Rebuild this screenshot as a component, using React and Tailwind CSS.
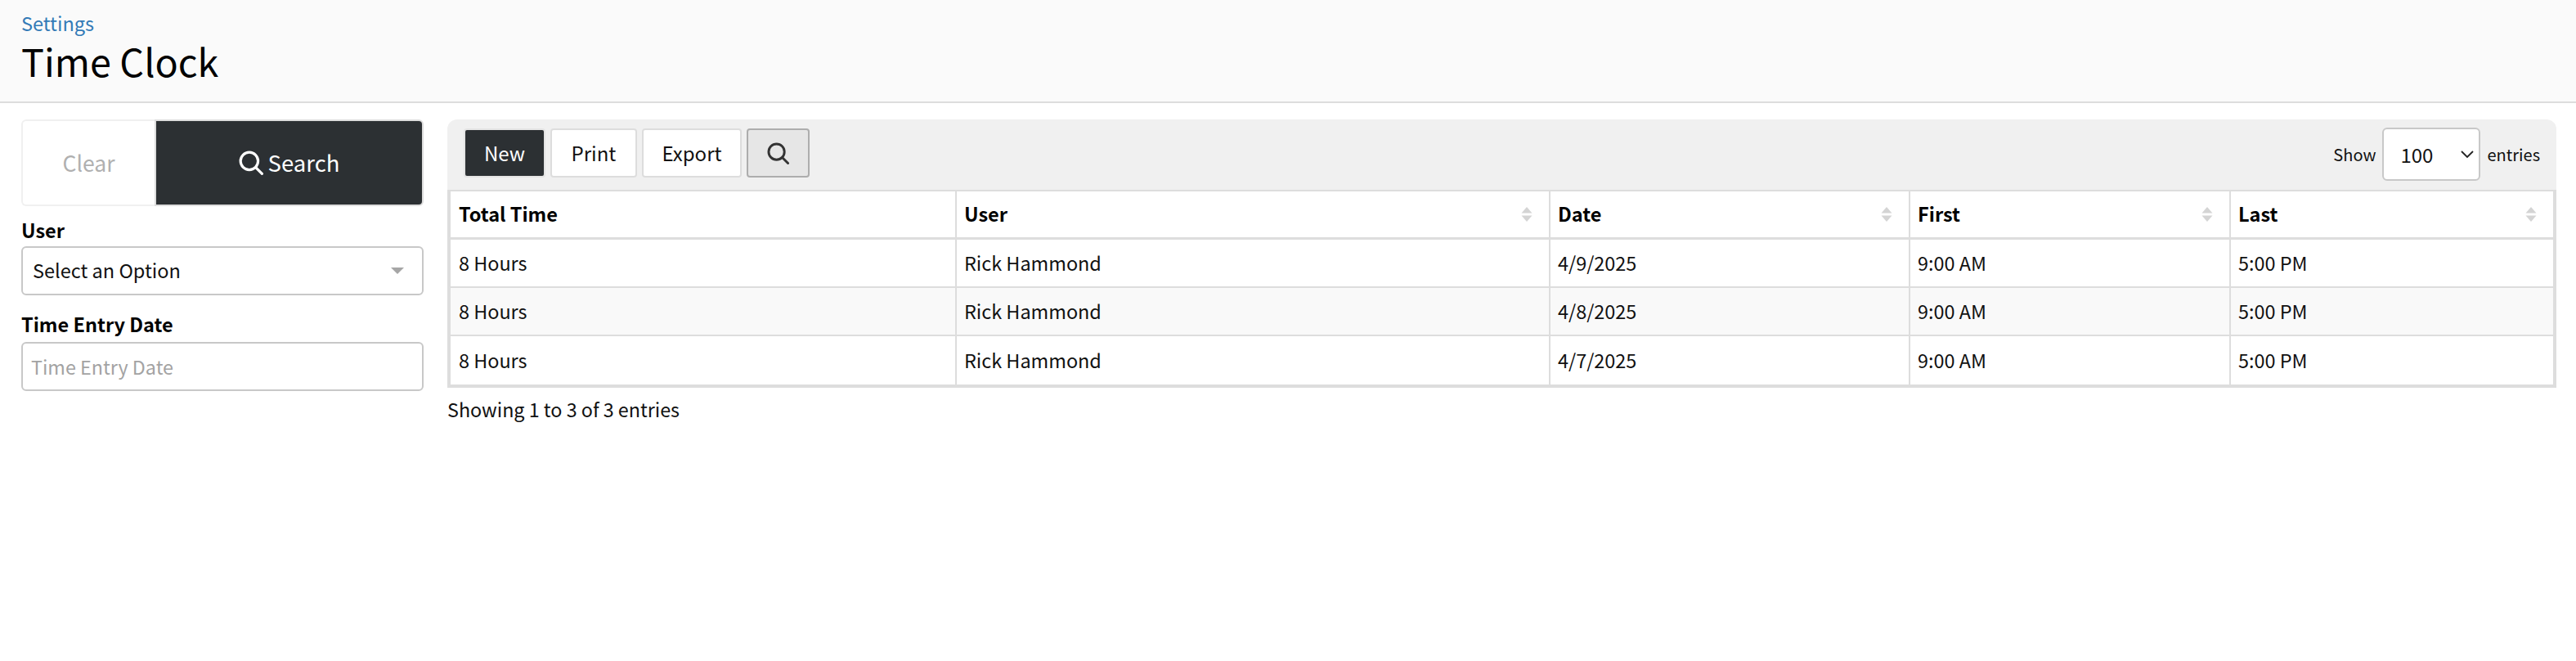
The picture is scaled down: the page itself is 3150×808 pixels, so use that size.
const rows = [
  ['8 Hours', 'Rick Hammond', '4/9/2025', '9:00 AM', '5:00 PM'],
  ['8 Hours', 'Rick Hammond', '4/8/2025', '9:00 AM', '5:00 PM'],
  ['8 Hours', 'Rick Hammond', '4/7/2025', '9:00 AM', '5:00 PM'],
]

const columns = [
  { name: 'Total Time', width: 'w-[619px]' },
  { name: 'User', width: 'w-[726px]', sort: true },
  { name: 'Date', width: 'w-[440px]', sort: true },
  { name: 'First', width: 'w-[392px]', sort: true },
  { name: 'Last', width: 'w-[394px]', sort: true },
]

const SearchIcon = ({ className }) => (
  <svg viewBox="0 0 28 28" fill="none" stroke="currentColor" strokeWidth="3" strokeLinecap="round" className={className}>
    <circle cx="12" cy="12" r="10" />
    <line x1="19.5" y1="19.5" x2="26.5" y2="26.5" />
  </svg>
)

const SortIcon = () => (
  <svg viewBox="0 0 14 18" className="w-[14px] h-[18px] shrink-0" fill="#d4d4d4">
    <path d="M7 0 L13.5 7.5 H0.5 Z" />
    <path d="M7 18 L13.5 10.5 H0.5 Z" />
  </svg>
)

const ToolButton = ({ children, className }) => (
  <button className={`h-[60px] rounded-[4px] border-2 flex items-center justify-center text-[24px] ${className}`}>
    {children}
  </button>
)

export default function App() {
  return (
    <div className="min-h-[808px] bg-white text-[#111] font-['Noto_Sans_CJK_JP','Noto_Sans',sans-serif]">
      <header className="h-[126px] bg-[#fafafa] border-b-2 border-[#dddddd] pl-[26px] pt-[12px]">
        <a className="block text-[23.5px] leading-[32px] text-[#337ab7]">Settings</a>
        <h1 className="text-[46.7px] leading-[60px] text-black">Time Clock</h1>
      </header>

      <div className="flex pt-[20px] pl-[26px] pr-[24px] gap-[28px]">
        <aside className="w-[492px] shrink-0">
          <div className="flex h-[106px]">
            <button className="w-[163px] border-2 border-r-0 border-[#f0f0f0] rounded-l-[6px] bg-white text-[26.5px] text-[#b0b0b0]">Clear</button>
            <button className="flex-1 flex items-center justify-center gap-[6px] border-2 border-[#dddddd] rounded-r-[6px] bg-[#2c3033] text-[27.5px] text-white">
              <SearchIcon className="w-[30px] h-[30px]" />
              Search
            </button>
          </div>

          <label className="block mt-[12px] text-[23.5px] leading-[34px] font-bold text-black">User</label>
          <div className="mt-[3px] h-[60px] flex items-center justify-between pl-[12px] pr-[22px] border-2 border-[#c8c8c8] rounded-[6px] bg-white text-[23.5px]">
            <span>Select an Option</span>
            <svg viewBox="0 0 16 8" className="w-[16px] h-[8px]" fill="#a6a6a6"><path d="M0 0 H16 L8 8 Z" /></svg>
          </div>

          <label className="block mt-[18px] text-[23.5px] leading-[34px] font-bold text-black">Time Entry Date</label>
          <input
            placeholder="Time Entry Date"
            className="mt-[5px] block w-full h-[60px] px-[10px] border-2 border-[#c8c8c8] rounded-[6px] bg-white text-[23.3px] placeholder:text-[#a3a3a3] outline-none"
          />
        </aside>

        <main className="flex-1 min-w-0 pl-[1px]">
          <div className="h-[86px] bg-[#f0f0f0] rounded-t-[12px] flex items-start justify-between pl-[20px] pr-[20px] pt-[10px]">
            <div className="flex gap-[6px] pt-[1px]">
              <ToolButton className="w-[100px] bg-[#2c3033] border-[#e4e4e4] text-white">New</ToolButton>
              <ToolButton className="w-[106px] bg-white border-[#dddddd]">Print</ToolButton>
              <ToolButton className="w-[122px] bg-white border-[#dddddd]">Export</ToolButton>
              <ToolButton className="w-[77px] bg-[#e6e6e6] border-[#adadad] text-[#333]">
                <SearchIcon className="w-[27px] h-[27px]" />
              </ToolButton>
            </div>
            <div className="flex items-center gap-[8px] text-[20px]">
              <span>Show</span>
              <div className="w-[120px] h-[65px] flex items-center justify-between pl-[20px] pr-[6px] border-2 border-[#c8c8c8] rounded-[6px] bg-white text-[24px]">
                <span>100</span>
                <svg viewBox="0 0 16 10" fill="none" stroke="#222" strokeWidth="1.8" className="w-[16px] h-[10px]"><path d="M1 1 L8 8 L15 1" /></svg>
              </div>
              <span>entries</span>
            </div>
          </div>

          <div className="border-x-4 border-t-2 border-b-4 border-[#dddddd]">
            <table className="w-full table-fixed border-separate border-spacing-0">
              <thead>
                <tr>
                  {columns.map((col, i) => (
                    <th key={col.name} className={`${col.width} h-[59px] border-b-[3px] border-[#dddddd] text-left text-[23.5px] font-bold text-black ${i < 4 ? 'border-r-2' : ''} ${i === 0 ? 'pl-[10px]' : 'pl-[9px] pr-[20px]'}`}>
                      <div className="flex items-center justify-between">
                        <span>{col.name}</span>
                        {col.sort && <SortIcon />}
                      </div>
                    </th>
                  ))}
                </tr>
              </thead>
              <tbody>
                {rows.map((row, r) => (
                  <tr key={r} className={r === 1 ? 'bg-[#f9f9f9]' : 'bg-white'}>
                    {row.map((cell, i) => (
                      <td key={i} className={`h-[59px] border-[#dddddd] text-[23.4px] ${i < 4 ? 'border-r-2' : ''} ${r < 2 ? 'border-b-2' : ''} ${i === 0 ? 'pl-[10px]' : 'pl-[9px]'}`}>
                        {cell}
                      </td>
                    ))}
                  </tr>
                ))}
              </tbody>
            </table>
          </div>

          <p className="mt-[9px] text-[23.3px] leading-[34px]">Showing 1 to 3 of 3 entries</p>
        </main>
      </div>
    </div>
  )
}
